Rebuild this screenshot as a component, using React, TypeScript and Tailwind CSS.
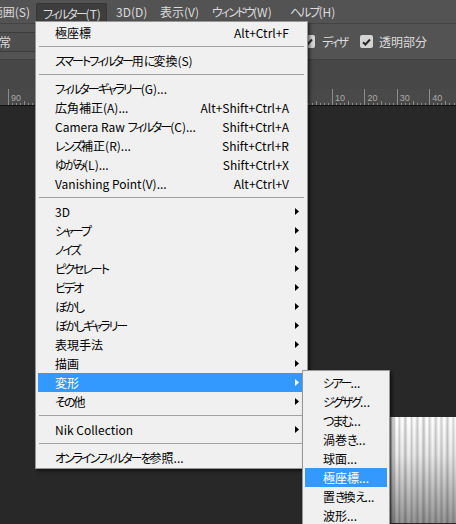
import React from 'react';

type MenuItem =
  | { kind: 'sep' }
  | { kind: 'item'; label: string; shortcut?: string; sub?: boolean; active?: boolean };

const sep: MenuItem = { kind: 'sep' };
const it = (label: string, shortcut?: string, sub?: boolean, active?: boolean): MenuItem => ({
  kind: 'item',
  label,
  shortcut,
  sub,
  active,
});

const filterItems: MenuItem[] = [
  it('極座標', 'Alt+Ctrl+F'),
  sep,
  it('スマートフィルター用に変換(S)'),
  sep,
  it('フィルターギャラリー(G)...'),
  it('広角補正(A)...', 'Alt+Shift+Ctrl+A'),
  it('Camera Raw フィルター(C)...', 'Shift+Ctrl+A'),
  it('レンズ補正(R)...', 'Shift+Ctrl+R'),
  it('ゆがみ(L)...', 'Shift+Ctrl+X'),
  it('Vanishing Point(V)...', 'Alt+Ctrl+V'),
  sep,
  it('3D', undefined, true),
  it('シャープ', undefined, true),
  it('ノイズ', undefined, true),
  it('ピクセレート', undefined, true),
  it('ビデオ', undefined, true),
  it('ぼかし', undefined, true),
  it('ぼかしギャラリー', undefined, true),
  it('表現手法', undefined, true),
  it('描画', undefined, true),
  it('変形', undefined, true, true),
  it('その他', undefined, true),
  sep,
  it('Nik Collection', undefined, true),
  sep,
  it('オンラインフィルターを参照...'),
];

const distortItems = ['シアー...', 'ジグザグ...', 'つまむ...', '渦巻き...', '球面...', '極座標...', '置き換え...', '波形...'];

// grey level per 1px column of the canvas strip at bottom right
const stripes = [
  140, 165, 215, 240, 225, 205, 240, 255, 255, 230, 210, 235, 250, 255, 240, 215, 200, 225, 250, 255, 255, 235, 210,
  230, 248, 255, 240, 220, 205, 230, 250, 255, 245, 220, 200, 215, 240, 255, 255, 230, 210, 225, 245, 255, 250, 230,
  205, 220, 240, 255, 248, 225, 210, 230, 250, 255, 240, 220, 200, 225, 245, 255, 250, 230, 215, 235, 250,
];

// kana in the UI font are much narrower than in Noto, so squeeze kana runs only
const Jp = ({ text }: { text: string }) => {
  const parts = text.split(/([\u3040-\u30ff]+)/);
  return (
    <>
      {parts.map((p, i) =>
        /^[\u3040-\u30ff]+$/.test(p) ? (
          <span key={i} className="tracking-[-2px]">
            {p}
          </span>
        ) : (
          <React.Fragment key={i}>{p}</React.Fragment>
        )
      )}
    </>
  );
};

const Arrow = ({ white }: { white?: boolean }) => (
  <svg width="4" height="7" viewBox="0 0 4 7" className="block">
    <polygon points="0,0 4,3.5 0,7" fill={white ? '#ffffff' : '#000000'} />
  </svg>
);

const Check = () => (
  <span className="flex h-[13px] w-[13px] shrink-0 items-center justify-center rounded-[2px] bg-[#d4d4d4]">
    <svg width="9" height="8" viewBox="0 0 9 8">
      <path d="M1 4.2 L3.4 6.5 L8 1.5" fill="none" stroke="#2a2a2a" strokeWidth="2" />
    </svg>
  </span>
);

const Ruler = () => {
  const majors = Array.from({ length: 15 }, (_, k) => 8 + 32.4 * k);
  return (
    <svg width="456" height="16" className="block">
      {majors.map((x, k) => (
        <g key={k}>
          <line x1={Math.round(x) + 0.5} y1="0" x2={Math.round(x) + 0.5} y2="16" stroke="#8c8c8c" strokeWidth="1" />
          {/* labels under the open menu are never seen */}
          {(x < 30 || x > 300) && (
            <text x={x + 3} y="12" fontSize="9" fill="#a9a9a9" fontFamily="'Liberation Sans', sans-serif">
              {Math.abs(90 - 10 * k)}
            </text>
          )}
          {[1, 2, 3, 4, 5, 6, 7].map((m) => (
            <line
              key={m}
              x1={Math.round(x + (32.4 / 8) * m) + 0.5}
              y1={m === 4 ? 12 : 14}
              x2={Math.round(x + (32.4 / 8) * m) + 0.5}
              y2="16"
              stroke="#8c8c8c"
              strokeWidth="1"
            />
          ))}
        </g>
      ))}
    </svg>
  );
};

const CanvasStrip = () => (
  <svg width="67" height="106" className="block">
    <defs>
      <linearGradient id="fade" x1="0" y1="0" x2="0" y2="1">
        <stop offset="0" stopColor="#000" stopOpacity="0" />
        <stop offset="0.35" stopColor="#000" stopOpacity="0.08" />
        <stop offset="1" stopColor="#000" stopOpacity="0.42" />
      </linearGradient>
    </defs>
    {stripes.map((g, i) => (
      <rect key={i} x={i} y="0" width="1" height="106" fill={`rgb(${g},${g},${g})`} />
    ))}
    <rect x="0" y="0" width="67" height="106" fill="url(#fade)" />
  </svg>
);

const App: React.FC = () => {
  return (
    <div className="relative flex h-[524px] w-[456px] flex-col overflow-hidden bg-[#282828] font-['Noto_Sans_CJK_JP',sans-serif] text-[12px] [font-feature-settings:'palt']">
      {/* Menu bar */}
      <div className="flex h-[24px] shrink-0 items-center whitespace-nowrap border-b border-[#444] bg-[#535353] text-[#dcdcdc]">
        <div className="flex w-[36px] justify-end overflow-hidden pr-[6px]">
          <span>
            <Jp text="範囲(S)" />
          </span>
        </div>
        <div className="mt-[3px] flex h-[21px] w-[71px] items-start rounded-t-[2px] border border-b-0 border-[#363636] bg-[#3e3e3e] pl-[6px] pt-[1px]">
          <Jp text="フィルター(T)" />
        </div>
        <div className="w-[46px] pl-[9px]">3D(D)</div>
        <div className="w-[52px] pl-[7px]">表示(V)</div>
        <div className="w-[78px] pl-[7px]">
          <Jp text="ウィンドウ(W)" />
        </div>
        <div className="pl-[7px]">
          <Jp text="ヘルプ(H)" />
        </div>
      </div>

      {/* Options bar */}
      <div className="flex h-[36px] shrink-0 items-center whitespace-nowrap border-b border-[#3f3f3f] bg-[#535353] text-[#dcdcdc]">
        <div className="ml-[-40px] flex h-[20px] w-[76px] items-center justify-end border border-[#3c3c3c] bg-[#4e4e4e] pr-[24px]">
          通常
        </div>
        <div className="ml-[266px] flex w-[58px] items-center gap-[7px]">
          <Check />
          <span>
            <Jp text="ディザ" />
          </span>
        </div>
        <div className="flex items-center gap-[6px]">
          <Check />
          <span>透明部分</span>
        </div>
      </div>

      {/* Tab band */}
      <div className="h-[29px] shrink-0 bg-[#474747]" />

      {/* Ruler */}
      <div className="h-[17px] shrink-0 border-b border-[#111] bg-[#494949]">
        <Ruler />
      </div>

      {/* Pasteboard */}
      <div className="flex-1">
        <div className="ml-[389px] mt-[311px]">
          <CanvasStrip />
        </div>
      </div>

      {/* Filter menu */}
      <div className="absolute left-[35px] top-[21px] w-[273px] border border-[#979797] bg-[#f0f0f0] pb-[1px] pt-[1px] text-black shadow-[2px_2px_3px_rgba(0,0,0,0.55)]">
        {filterItems.map((m, i) =>
          m.kind === 'sep' ? (
            <div key={i} className="mx-[3px] py-[4px]">
              <div className="h-px bg-[#a0a0a0]" />
            </div>
          ) : (
            <div
              key={i}
              className={`mx-[2px] flex h-[19px] items-center pl-[17px] ${m.active ? 'bg-[#3399ff] text-white' : ''}`}
            >
              <span className="flex-1 whitespace-nowrap">
                <Jp text={m.label} />
              </span>
              {m.shortcut && <span className="whitespace-nowrap">{m.shortcut}</span>}
              <span className="flex w-[16px] pl-[6px]">{m.sub && <Arrow white={m.active} />}</span>
            </div>
          )
        )}
      </div>

      {/* Distort submenu */}
      <div className="absolute left-[302px] top-[370px] w-[88px] border border-[#979797] bg-[#f0f0f0] pb-[2px] pt-[2px] text-black shadow-[2px_2px_3px_rgba(0,0,0,0.55)]">
        {distortItems.map((label, i) => (
          <div
            key={i}
            className={`mx-[2px] flex h-[19px] items-center whitespace-nowrap pl-[18px] ${i === 5 ? 'bg-[#3399ff] text-white' : ''}`}
          >
            <Jp text={label} />
          </div>
        ))}
      </div>
    </div>
  );
};

export default App;
